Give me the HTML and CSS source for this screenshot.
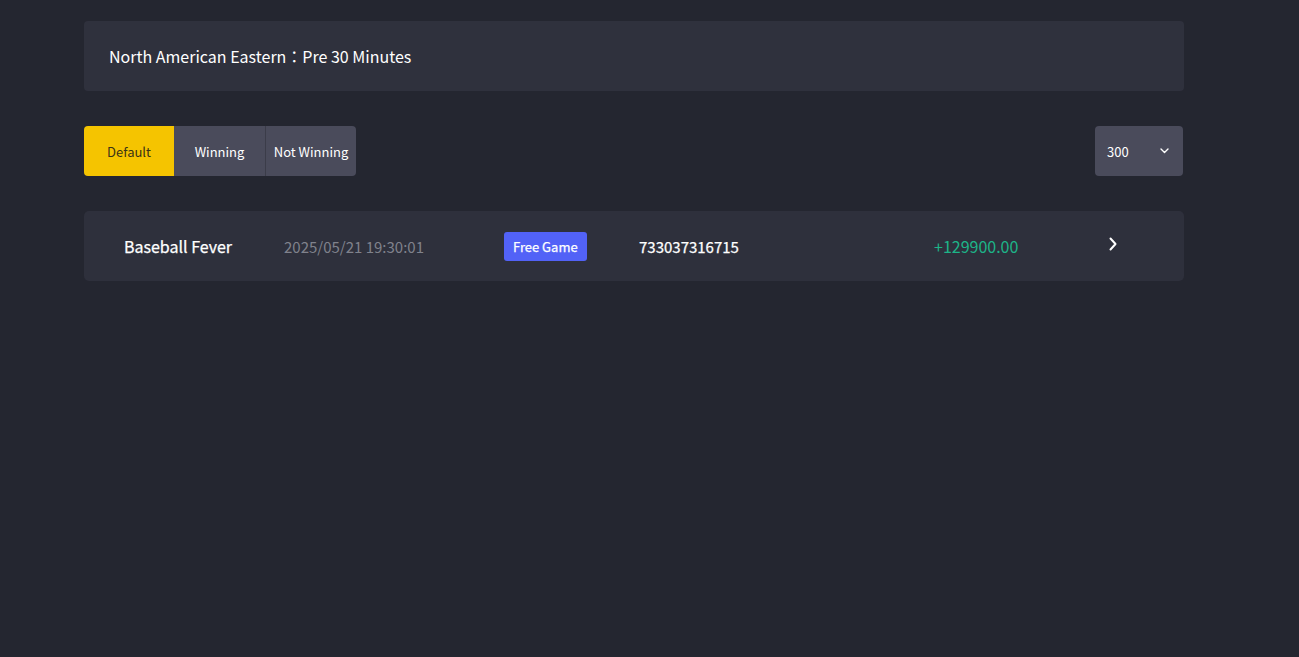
FILE: index.html
```html
<!DOCTYPE html>
<html lang="en">
<head>
<meta charset="utf-8">
<title>Bet History</title>
<link rel="stylesheet" href="styles.css">
</head>
<body>
<main class="page">
  <section class="zone-bar">North American Eastern：Pre 30 Minutes</section>

  <div class="toolbar">
    <div class="tabs">
      <button class="tab active">Default</button>
      <button class="tab">Winning</button>
      <button class="tab">Not Winning</button>
    </div>
    <div class="select">
      <span>300</span>
      <svg class="caret" viewBox="0 0 9 6" width="9" height="6"><path d="M1 1l3.5 3.5L8 1" fill="none" stroke="#fff" stroke-width="1.4" stroke-linecap="round" stroke-linejoin="round"/></svg>
    </div>
  </div>

  <ul class="records">
    <li class="record">
      <span class="game">Baseball Fever</span>
      <span class="time">2025/05/21 19:30:01</span>
      <span class="badge-cell"><span class="badge">Free Game</span></span>
      <span class="ticket">733037316715</span>
      <span class="amount">+129900.00</span>
      <svg class="chevron" viewBox="0 0 8 14" width="8" height="14"><path d="M1.5 1.5l5 5.5-5 5.5" fill="none" stroke="#fff" stroke-width="2" stroke-linecap="round" stroke-linejoin="round"/></svg>
    </li>
  </ul>
</main>
</body>
</html>
```

FILE: styles.css
```css
* { box-sizing: border-box; }

html, body {
  margin: 0;
  padding: 0;
  background: #242630;
  color: #fff;
  font-family: "Noto Sans CJK TC", "Noto Sans CJK SC", "Noto Sans", sans-serif;
}

.page {
  width: 1100px;
  margin-left: 84px;
  padding-top: 21px;
}

.zone-bar {
  height: 70px;
  display: flex;
  align-items: center;
  padding-left: 25px;
  background: #2f313d;
  border-radius: 4px;
  font-size: 16px;
  color: #fff;
}

.toolbar {
  margin-top: 35px;
  display: flex;
  justify-content: space-between;
  align-items: center;
  padding-right: 1px;
}

.tabs {
  display: flex;
  border-radius: 4px;
  overflow: hidden;
}

.tab {
  height: 50px;
  width: 91px;
  border: 0;
  margin: 0;
  padding: 0;
  background: #4a4b5b;
  color: #fff;
  font-family: inherit;
  font-size: 13px;
}

.tab:first-child { width: 90px; }

.tab + .tab + .tab { border-left: 1px solid #3b3c49; }

.tab.active {
  background: #f5c400;
  color: #3a3316;
}

.select {
  width: 88px;
  height: 50px;
  background: #4a4b5b;
  border-radius: 4px;
  display: flex;
  align-items: center;
  justify-content: space-between;
  padding: 0 14px 0 12px;
  font-size: 13px;
}

.caret { display: block; }

.records {
  list-style: none;
  margin: 35px 0 0;
  padding: 0;
}

.record {
  height: 70px;
  display: flex;
  align-items: center;
  background: #2e303c;
  border-radius: 5px;
  padding-left: 40px;
}

/* medium-weight labels: regular face with a light stroke */
.game,
.badge,
.ticket {
  -webkit-text-stroke: 0.25px currentColor;
}

.game {
  width: 160px;
  font-size: 16px;
}

.time {
  width: 220px;
  font-size: 15px;
  color: #80828c;
}

.badge-cell { width: 135px; }

.badge {
  display: inline-block;
  height: 29px;
  line-height: 29px;
  padding: 0 9px;
  background: #5262f7;
  border-radius: 3px;
  font-size: 13px;
}

.ticket {
  width: 295px;
  font-size: 15px;
}

.amount {
  width: 175px;
  font-size: 16px;
  color: #1db488;
}

.chevron {
  display: block;
  margin-top: -4px;
}
```
